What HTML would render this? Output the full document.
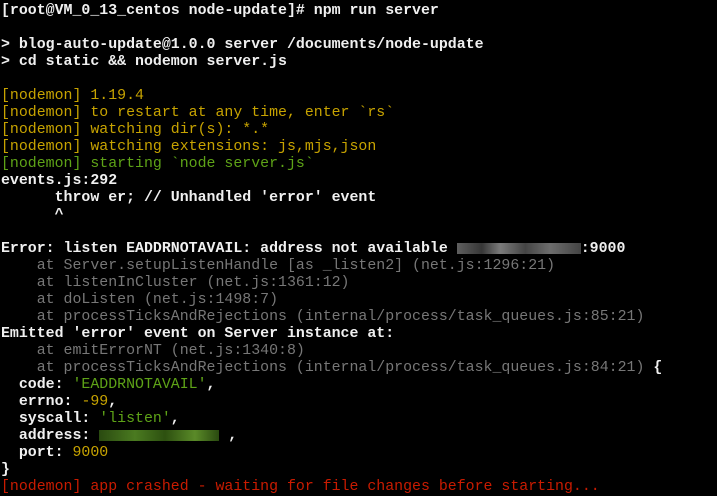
<!DOCTYPE html>
<html><head><meta charset="utf-8"><style>
html,body{margin:0;padding:0;background:#000;width:717px;height:493px;overflow:hidden}
pre{margin:0;position:absolute;left:1px;top:3px;font-family:"Liberation Mono","Courier New",monospace;font-size:14.9px;line-height:17px;color:#f0f0f0;font-weight:bold;white-space:pre}
.y{color:#c7a300;font-weight:normal}
.g{color:#5ea317;font-weight:normal}
.gr{color:#777;font-weight:normal}
.r{color:#c91b00;font-weight:normal}
.blur{display:inline-block;vertical-align:middle;height:11px;background:linear-gradient(90deg,#777 0,#444 20%,#999 35%,#555 55%,#888 75%,#555 100%);opacity:.8}
.blurg{display:inline-block;vertical-align:middle;height:11px;background:linear-gradient(90deg,#2a4a10 0,#4a7a20 30%,#2d5010 55%,#5a8a28 80%,#2a4a10 100%)}
</style></head><body><pre>[root@VM_0_13_centos node-update]# npm run server

&gt; blog-auto-update@1.0.0 server /documents/node-update
&gt; cd static &amp;&amp; nodemon server.js

<span class="y">[nodemon] 1.19.4</span>
<span class="y">[nodemon] to restart at any time, enter `rs`</span>
<span class="y">[nodemon] watching dir(s): *.*</span>
<span class="y">[nodemon] watching extensions: js,mjs,json</span>
<span class="g">[nodemon] starting `node server.js`</span>
events.js:292
      throw er; // Unhandled 'error' event
      ^

Error: listen EADDRNOTAVAIL: address not available <span class="blur" style="width:124px"></span>:9000
<span class="gr">    at Server.setupListenHandle [as _listen2] (net.js:1296:21)</span>
<span class="gr">    at listenInCluster (net.js:1361:12)</span>
<span class="gr">    at doListen (net.js:1498:7)</span>
<span class="gr">    at processTicksAndRejections (internal/process/task_queues.js:85:21)</span>
Emitted 'error' event on Server instance at:
<span class="gr">    at emitErrorNT (net.js:1340:8)</span>
<span class="gr">    at processTicksAndRejections (internal/process/task_queues.js:84:21)</span> {
  code: <span class="g">'EADDRNOTAVAIL'</span>,
  errno: <span class="y">-99</span>,
  syscall: <span class="g">'listen'</span>,
  address: <span class="blurg" style="width:120px"></span> ,
  port: <span class="y">9000</span>
}
<span class="r">[nodemon] app crashed - waiting for file changes before starting...</span></pre></body></html>
